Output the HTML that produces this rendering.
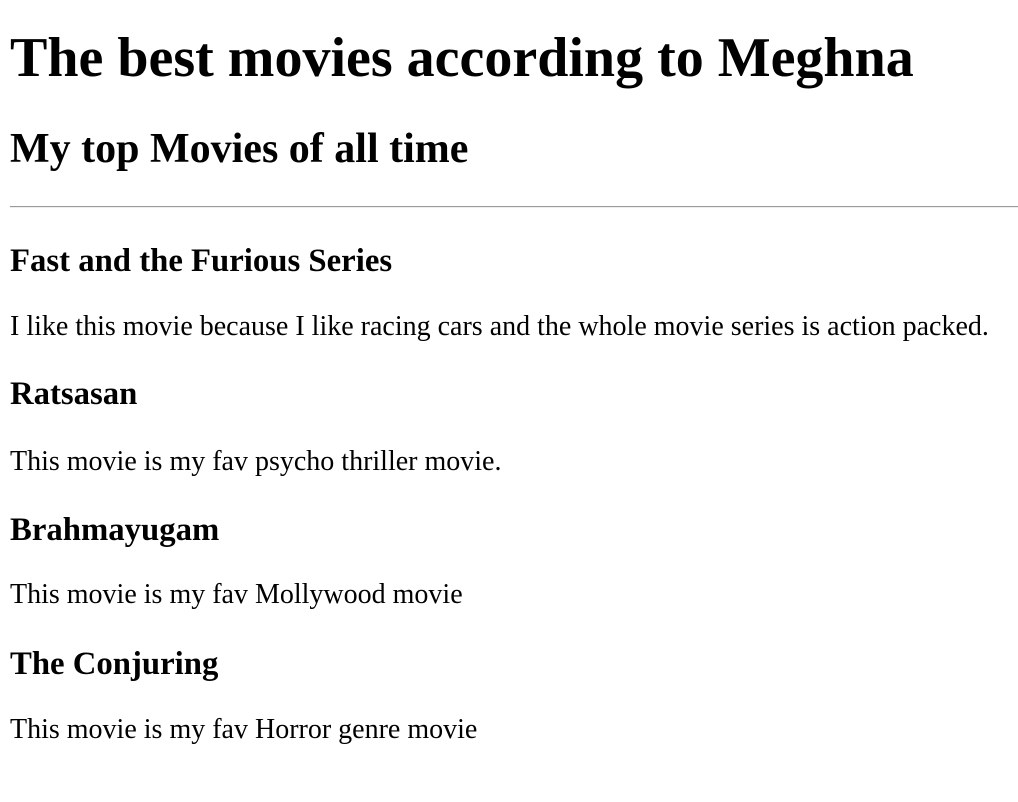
<!DOCTYPE html>
<html><head><meta charset="utf-8"><style>
html,body{margin:0;padding:0;background:#fff;width:1018px;height:802px;overflow:hidden;}
body{font-family:"Liberation Serif","Times New Roman",serif;color:#000;position:relative;}
.t{position:absolute;left:10px;white-space:nowrap;line-height:1.15;margin:0;}
.h1{font-size:56px;font-weight:bold;}
.h2{font-size:42px;font-weight:bold;}
.h3{font-size:32.76px;font-weight:bold;}
.p{font-size:28px;}
.hr{position:absolute;left:10px;width:1008px;top:206px;height:0;border-top:1px solid #9a9a9a;border-bottom:1px solid #eee;}
</style></head><body>
<div class="t h1" style="top:26px">The best movies according to Meghna</div>
<div class="t h2" style="top:125px">My top Movies of all time</div>
<div class="hr"></div>
<div class="t h3" style="top:243px">Fast and the Furious Series</div>
<div class="t p" style="top:311px">I like this movie because I like racing cars and the whole movie series is action packed.</div>
<div class="t h3" style="top:376px">Ratsasan</div>
<div class="t p" style="top:446px">This movie is my fav psycho thriller movie.</div>
<div class="t h3" style="top:512px">Brahmayugam</div>
<div class="t p" style="top:579px">This movie is my fav Mollywood movie</div>
<div class="t h3" style="top:646px">The Conjuring</div>
<div class="t p" style="top:714px">This movie is my fav Horror genre movie</div>
</body></html>
